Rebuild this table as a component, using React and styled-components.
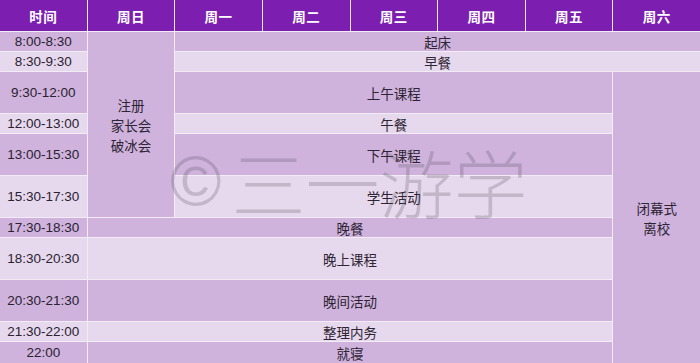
import React from "react";
import styled, { createGlobalStyle } from "styled-components";

const Global = createGlobalStyle`
  html, body { margin: 0; padding: 0; background: #ffffff; }
  body { font-family: "Liberation Sans", "Noto Sans CJK SC", sans-serif; }
`;

const Wrap = styled.div`
  position: relative;
  width: 700px;
  height: 363px;
  overflow: hidden;
`;

const Grid = styled.div`
  display: grid;
  grid-template-columns: repeat(8, 1fr);
  grid-template-rows: 31px 19px 19px 41px 19px 41px 41px 19px 41px 41px 19px 21px;
  gap: 1px;
  background: #f3ecf6;
  width: 700px;
  height: 363px;
`;

const Head = styled.div`
  background: #7c1fb0;
  color: #ffffff;
  font-family: "Noto Sans CJK SC", sans-serif;
  font-weight: 700;
  font-size: 13.5px;
  display: flex;
  align-items: center;
  justify-content: center;
  letter-spacing: 0.5px;
`;

const Cell = styled.div`
  grid-column: ${(p) => p.$col};
  grid-row: ${(p) => p.$row};
  background: ${(p) => (p.$light ? "#e7d9ed" : "#cfb3dd")};
  color: #2e2433;
  display: flex;
  flex-direction: column;
  align-items: center;
  justify-content: center;
  text-align: center;
  font-family: "Noto Sans CJK SC", sans-serif;
  font-size: 13.5px;
  line-height: 20px;
`;

const TimeCell = styled(Cell)`
  font-family: "Liberation Sans", sans-serif;
  font-size: 13.5px;
  color: #2a2230;
`;

const Watermark = styled.div`
  position: absolute;
  left: 170px;
  top: 144px;
  display: flex;
  align-items: center;
  color: rgba(90, 80, 95, 0.26);
  pointer-events: none;
  line-height: 1;
`;

const Copy = styled.span`
  font-family: "Liberation Sans", sans-serif;
  font-weight: 400;
  font-size: 70px;
  margin-right: 10px;
`;

const MarkText = styled.span`
  font-family: "Noto Sans CJK SC", sans-serif;
  font-weight: 300;
  font-size: 74px;
`;

const heads = ["时间", "周日", "周一", "周二", "周三", "周四", "周五", "周六"];
const times = [
  "8:00-8:30",
  "8:30-9:30",
  "9:30-12:00",
  "12:00-13:00",
  "13:00-15:30",
  "15:30-17:30",
  "17:30-18:30",
  "18:30-20:30",
  "20:30-21:30",
  "21:30-22:00",
  "22:00",
];

const events = [
  { t: "起床", col: "3 / 9", row: "2", light: false },
  { t: "早餐", col: "3 / 9", row: "3", light: true },
  { t: "上午课程", col: "3 / 8", row: "4", light: false },
  { t: "午餐", col: "3 / 8", row: "5", light: true },
  { t: "下午课程", col: "3 / 8", row: "6", light: false },
  { t: "学生活动", col: "3 / 8", row: "7", light: true },
  { t: "晚餐", col: "2 / 8", row: "8", light: false },
  { t: "晚上课程", col: "2 / 8", row: "9", light: true },
  { t: "晚间活动", col: "2 / 8", row: "10", light: false },
  { t: "整理内务", col: "2 / 8", row: "11", light: true },
  { t: "就寝", col: "2 / 8", row: "12", light: false },
];

export default function App() {
  return (
    <Wrap>
      <Global />
      <Grid>
        {heads.map((h) => (
          <Head key={h}>{h}</Head>
        ))}
        {times.map((t, i) => (
          <TimeCell key={t} $col="1" $row={`${i + 2}`} $light={i % 2 === 1}>
            {t}
          </TimeCell>
        ))}
        <Cell $col="2" $row="2 / 8">
          <div>注册</div>
          <div>家长会</div>
          <div>破冰会</div>
        </Cell>
        <Cell $col="8" $row="4 / 13">
          <div>闭幕式</div>
          <div>离校</div>
        </Cell>
        {events.map((e) => (
          <Cell key={e.t} $col={e.col} $row={e.row} $light={e.light}>
            {e.t}
          </Cell>
        ))}
      </Grid>
      <Watermark>
        <Copy>©</Copy>
        <MarkText>三一游学</MarkText>
      </Watermark>
    </Wrap>
  );
}
